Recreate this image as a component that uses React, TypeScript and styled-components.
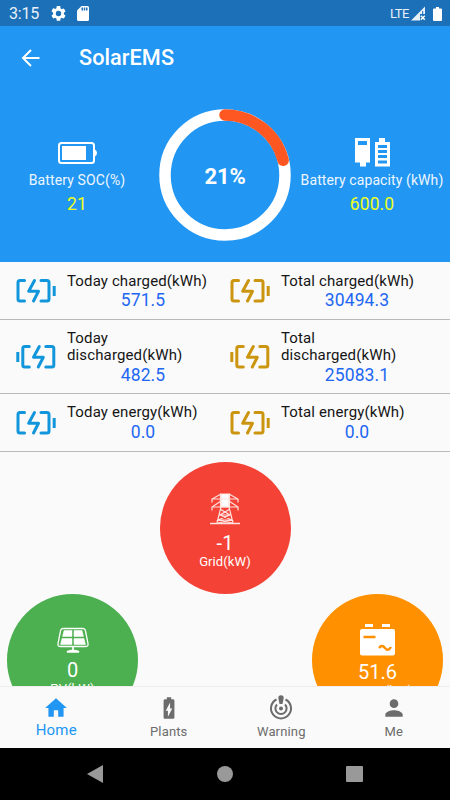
import React from "react";
import styled, { createGlobalStyle } from "styled-components";

const Global = createGlobalStyle`
  *{box-sizing:border-box}
  html,body{margin:0;padding:0;background:#000}
  body{font-family:Roboto,"Liberation Sans",sans-serif;overflow:hidden}
  svg{display:block;flex:none}
`;
const Screen = styled.div`width:450px;height:800px;display:flex;flex-direction:column;background:#fafafa;overflow:hidden;`;
const StatusBar = styled.div`height:26px;flex:none;background:#1b70b7;color:#e9f1f8;display:flex;align-items:center;padding:1px 8px 0 9px;`;
const Clock = styled.span`font-size:16px;line-height:20px;letter-spacing:-.2px;width:42px;padding-top:1px;`;
const StatusIcons = styled.div`display:flex;align-items:center;gap:11px;flex:1;`;
const Network = styled.span`font-size:13px;letter-spacing:-.5px;line-height:20px;margin-right:2px;`;
const SignalGap = styled.div`width:7px;`;
const AppBar = styled.div`height:64px;flex:none;background:#2196f3;display:flex;align-items:center;padding:0 21px 1px;gap:39px;`;
const Title = styled.h1`margin:0;color:#fff;font-size:21.7px;font-weight:500;line-height:28px;letter-spacing:.05px;`;
const Summary = styled.section`height:172px;flex:none;background:#2196f3;display:grid;grid-template-columns:154px 142px 154px;`;
const Stat = styled.div<{ $inset?: number }>`display:flex;flex-direction:column;align-items:center;padding:47px ${p => p.$inset ?? 0}px 0 0;svg{height:32px;}`;
const StatLabel = styled.span<{ $gap: number }>`color:#eef7ff;font-size:14px;line-height:18px;margin-top:2px;letter-spacing:${p => p.$gap}px;white-space:nowrap;`;
const StatValue = styled.span`color:#eeff1e;font-size:17.5px;line-height:22px;margin-top:4px;letter-spacing:.1px;`;
const Gauge = styled.div`display:grid;place-items:center;height:142px;margin-top:14px;& > *{grid-area:1/1;}`;
const GaugeText = styled.span`color:#fff;font-size:22px;font-weight:700;letter-spacing:-.2px;padding-top:2px;`;
const Row = styled.div<{ $h: number; $top: number }>`height:${p => p.$h}px;flex:none;display:grid;grid-template-columns:214px 236px;border-bottom:1px solid #b9b9b9;--text-top:${p => p.$top}px;`;
const Cell = styled.div`display:flex;align-items:center;padding-left:16px;gap:11px;`;
const Metric = styled.div`width:152px;flex:none;display:flex;flex-direction:column;padding-top:var(--text-top);`;
const MetricLabel = styled.span`color:#151515;font-size:15px;line-height:17.5px;letter-spacing:.13px;white-space:pre-line;`;
const MetricValue = styled.span`color:#1d67f2;font-size:17.5px;line-height:20px;text-align:center;letter-spacing:.1px;`;
const Flow = styled.main`flex:1;min-height:0;overflow:hidden;display:flex;flex-direction:column;align-items:center;padding:10px 7px 0;`;
const SideNodes = styled.div`align-self:stretch;display:flex;justify-content:space-between;flex:none;`;
const Node = styled.div<{ $bg: string }>`width:131px;height:132px;flex:none;border-radius:50%;background:${p => p.$bg};color:#fff;display:flex;flex-direction:column;align-items:center;padding-top:27px;`;
const NodeValue = styled.span<{ $lift?: number }>`font-size:20px;line-height:24px;margin-top:${p => 2 - (p.$lift ?? 0)}px;`;
const NodeLabel = styled.span<{ $drop?: number }>`font-size:13px;line-height:16px;margin-top:${p => -1 + (p.$drop ?? 0)}px;letter-spacing:.1px;`;
const TabBar = styled.nav`height:62px;flex:none;display:grid;grid-template-columns:repeat(4,1fr);border-top:1px solid #eee;background:#fafafa;`;
const Tab = styled.div<{ $active?: boolean }>`display:flex;flex-direction:column;align-items:center;padding-top:8px;color:${p => (p.$active ? "#2196f3" : "#6c6c6c")};`;
const TabLabel = styled.span<{ $active?: boolean }>`font-size:${p => (p.$active ? 15 : 13)}px;line-height:18px;margin-top:${p => (p.$active ? 0 : 2)}px;letter-spacing:.15px;`;
const SystemNav = styled.footer`height:52px;flex:none;background:#000;display:flex;justify-content:center;align-items:center;gap:113px;`;

const ChargeIcon = ({ color, flip }: { color: string; flip?: boolean }) => (
  <svg width="40" height="28" viewBox="0 0 40 28" fill="none" stroke={color} strokeWidth="3" strokeLinecap="round" strokeLinejoin="round">
    <g transform={flip ? "translate(4.8)" : undefined}>
      <path d="M8.500 3.500H4Q2 3.500 2 5.500V22Q2 24 4 24H8.500M25 3.500H31Q33 3.500 33 5.500V22Q33 24 31 24H25M18.500 3.500L12.700 14.200H22.500L17.500 24" />
    </g>
    <path d={flip ? "M1.800 9v10" : "M38.200 9v10"} strokeLinecap="butt" />
  </svg>
);

const rows = [
  { h: 58, top: 2, kind: " charged(kWh)", values: ["571.5", "30494.3"] },
  { h: 74, top: 1, kind: "\ndischarged(kWh)", values: ["482.5", "25083.1"], flip: true },
  { h: 58, top: 1, kind: " energy(kWh)", values: ["0.0", "0.0"] },
];

const ARC = 2 * Math.PI * 60;

export default function App() {
  return (
    <>
      <Global />
      <Screen>
        <StatusBar>
          <Clock>3:15</Clock>
          <StatusIcons>
            <svg width="15" height="15" viewBox="2 2 20 20" fill="#fff"><path d="M19.14 12.94c.04-.3.06-.61.06-.94s-.02-.64-.07-.94l2.03-1.58a.49.49 0 0 0 .12-.61l-1.92-3.32a.49.49 0 0 0-.59-.22l-2.39.96a7 7 0 0 0-1.62-.94l-.36-2.54A.48.48 0 0 0 13.92 2h-3.84a.48.48 0 0 0-.47.41l-.36 2.54c-.59.24-1.13.57-1.62.94l-2.39-.96a.48.48 0 0 0-.59.22L2.74 8.87a.48.48 0 0 0 .12.61l2.03 1.58a7 7 0 0 0 0 1.88l-2.03 1.58a.49.49 0 0 0-.12.61l1.92 3.32c.12.22.37.29.59.22l2.39-.96c.5.38 1.03.7 1.62.94l.36 2.54c.05.24.24.41.48.41h3.84c.24 0 .44-.17.47-.41l.36-2.54a7 7 0 0 0 1.62-.94l2.39.96c.22.08.47 0 .59-.22l1.92-3.32a.48.48 0 0 0-.12-.61zM12 15.6a3.6 3.6 0 1 1 0-7.2 3.6 3.6 0 0 1 0 7.2z" /></svg>
            <svg width="12" height="15" viewBox="4 2 16 20" fill="#fff"><path d="M18 2h-8L4 8v12a2 2 0 0 0 2 2h12a2 2 0 0 0 2-2V4a2 2 0 0 0-2-2zm-6 6h-2V4h2zm3 0h-2V4h2zm3 0h-2V4h2z" /></svg>
          </StatusIcons>
          <Network>LTE</Network>
          <svg width="15" height="15" viewBox="0 0 15 15"><path d="M0 14.500L14 .5V8H9V14.500Z" fill="#e9f1f8" /><path d="M11.700 5v3" stroke="#1b70b7" /><path d="M9.800 9.700l4 4M13.800 9.700l-4 4" stroke="#fff" strokeWidth="1.500" /></svg>
          <SignalGap />
          <svg width="9" height="14" viewBox="0 0 9 14" fill="#fff"><path d="M3 0h3v1.500h2q1 0 1 1v10.500q0 1-1 1H1q-1 0-1-1V2.500q0-1 1-1h2z" /></svg>
        </StatusBar>
        <AppBar>
          <svg width="19" height="18" viewBox="0 0 19 18" fill="none" stroke="#fff" strokeWidth="2"><path d="M18.500 9H2.500M10 1L2 9l8 8" /></svg>
          <Title>SolarEMS</Title>
        </AppBar>
        <Summary>
          <Stat>
            <svg width="40" height="32" viewBox="0 0 40 32"><rect x="2" y="6" width="35" height="20" rx="2.500" fill="none" stroke="#fff" strokeWidth="2" /><path d="M5 9h24v14H5z" fill="#fff" /><path d="M38 12.500q2 1 2 3.500t-2 3.500z" fill="#fff" /></svg>
            <StatLabel $gap={0.12}>Battery SOC(%)</StatLabel>
            <StatValue>21</StatValue>
          </Stat>
          <Gauge>
            <svg width="132" height="132" viewBox="0 0 132 132" fill="none" strokeWidth="11.500">
              <circle cx="66" cy="66" r="60" stroke="#fff" />
              <circle cx="66" cy="66" r="60" stroke="#ff5722" strokeLinecap="round" strokeDasharray={`${ARC * 0.21} ${ARC}`} transform="rotate(-90 66 66)" />
            </svg>
            <GaugeText>21%</GaugeText>
          </Gauge>
          <Stat $inset={2}>
            <svg width="36" height="32" viewBox="0 0 36 32" fill="#fff"><path fillRule="evenodd" d="M1 1h15v24.500h-4v4H6v-4H1zM4 4v4h9V4zM25 1h6v4h5v24.500H21V5h4zM24 8v3h9V8zM24 13v3h9v-3zM24 18v3h9v-3zM24 23.500v3h9v-3z" /></svg>
            <StatLabel $gap={0.1}>Battery capacity (kWh)</StatLabel>
            <StatValue>600.0</StatValue>
          </Stat>
        </Summary>
        {rows.map(r => (
          <Row key={r.kind} $h={r.h} $top={r.top}>
            {["Today", "Total"].map((period, i) => (
              <Cell key={period}>
                <ChargeIcon color={i ? "#cb950f" : "#1296db"} flip={r.flip} />
                <Metric>
                  <MetricLabel>{period + r.kind}</MetricLabel>
                  <MetricValue>{r.values[i]}</MetricValue>
                </Metric>
              </Cell>
            ))}
          </Row>
        ))}
        <Flow>
          <Node $bg="#f44336">
            <svg width="32" height="40" viewBox="0 0 32 40" fill="none" stroke="#ffe2df" strokeWidth="1.200">
              <path d="M11.500 5h9v13h-9z" fill="#fff" />
              <path d="M12 5L3 10v3.500M20 5l9 5v3.500M3 10h26M12 12L3 18v3.500M20 12l9 6v3.500M3 18h26M12 5v13L8 34M20 5v13l4 16M11 20l10 6-12 5 14 3M21 20l-10 6 12 5-14 3M11 26h10M9 31h14" />
              <path d="M1 34.500h30" strokeWidth="1.500" />
            </svg>
            <NodeValue>-1</NodeValue>
            <NodeLabel>Grid(kW)</NodeLabel>
          </Node>
          <SideNodes>
            <Node $bg="#4caf50">
              <svg width="32" height="36" viewBox="0 0 32 36" fill="none" stroke="#fff">
                <path d="M6 7.500h20q2 0 2.400 2l2.600 13q.5 3-2 3H3q-2.500 0-2-3L3.600 9.500Q4 7.500 6 7.500z" strokeWidth="1.300" />
                <path d="M7 9.500h8v6H5.500zM17 9.500h8l1.500 6H17zM5 17.500h10v6H3.500zM17 17.500h10l1.500 6H17z" fill="#fff" strokeWidth=".5" />
                <path d="M16 26v4M10 30.800q6-3 12 0z" strokeWidth="1.700" />
              </svg>
              <NodeValue $lift={1}>0</NodeValue>
              <NodeLabel>PV(kW)</NodeLabel>
            </Node>
            <Node $bg="#ff9100">
              <svg width="36" height="38" viewBox="0 0 36 38" fill="none">
                <path d="M5 3h8v3H5zM22 3h8v3h-8z" fill="#fff" />
                <rect x="0" y="8" width="35" height="26.500" rx="2" fill="#fff" />
                <path d="M3.500 16h12M19 27q3-4 6 0t6-1" stroke="#ff9100" strokeWidth="2.400" />
              </svg>
              <NodeValue $lift={1}>51.6</NodeValue>
              <NodeLabel>Battery(kW)</NodeLabel>
            </Node>
          </SideNodes>
        </Flow>
        <TabBar>
          <Tab $active>
            <svg width="26" height="26" viewBox="0 0 24 24" fill="currentColor"><path d="M10 20v-6h4v6h5v-8h3L12 3 2 12h3v8z" /></svg>
            <TabLabel $active>Home</TabLabel>
          </Tab>
          <Tab>
            <svg width="26" height="26" viewBox="0 0 24 24" fill="currentColor"><path d="M15.670 4H14V2h-4v2H8.330C7.600 4 7 4.600 7 5.330v15.330C7 21.400 7.600 22 8.330 22h7.330c.74 0 1.340-.6 1.340-1.330V5.330C17 4.600 16.400 4 15.670 4zM11 20v-5.500H9L13 7v5.500h2z" /></svg>
            <TabLabel>Plants</TabLabel>
          </Tab>
          <Tab>
            <svg width="26" height="26" viewBox="0 0 26 26" fill="none" stroke="currentColor" strokeWidth="2">
              <path d="M8.500 4.500A10 10 0 1 0 17.500 4.500M9 9.500A5.600 5.600 0 1 0 17 9.500" />
              <circle cx="13" cy="13.500" r="2" fill="currentColor" stroke="none" />
              <path d="M10.300 3q0-2.700 2.700-2.700T15.700 3L14.500 9h-3z" fill="currentColor" stroke="none" />
            </svg>
            <TabLabel>Warning</TabLabel>
          </Tab>
          <Tab>
            <svg width="26" height="26" viewBox="0 0 24 24" fill="currentColor"><path d="M12 12a4 4 0 1 0 0-8 4 4 0 0 0 0 8zm0 2c-2.670 0-8 1.340-8 4v2h16v-2c0-2.660-5.330-4-8-4z" /></svg>
            <TabLabel>Me</TabLabel>
          </Tab>
        </TabBar>
        <SystemNav>
          <svg width="17" height="18" viewBox="0 0 17 18" fill="#999"><path d="M16 0v18L0 9z" /></svg>
          <svg width="16" height="16" viewBox="0 0 16 16" fill="#999"><circle cx="8" cy="8" r="8" /></svg>
          <svg width="17" height="16" viewBox="0 0 17 16" fill="#999"><rect width="17" height="16" rx="1" /></svg>
        </SystemNav>
      </Screen>
    </>
  );
}
